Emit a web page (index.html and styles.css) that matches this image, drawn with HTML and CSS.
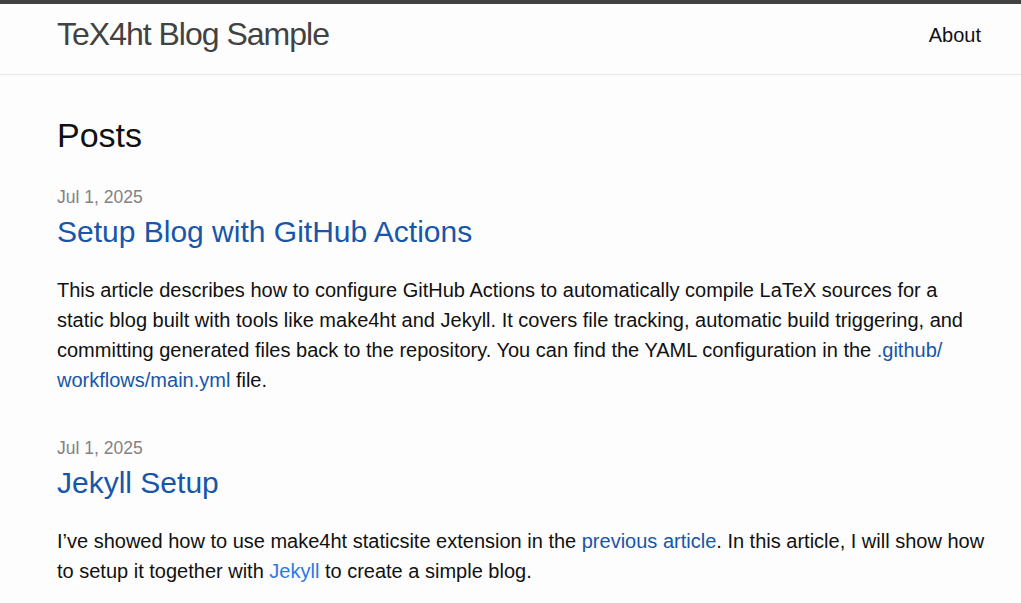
FILE: index.html
```html
<!DOCTYPE html>
<html lang="en">
<head>
<meta charset="utf-8">
<title>TeX4ht Blog Sample</title>
<link rel="stylesheet" href="styles.css">
</head>
<body>
<header class="site-header">
  <div class="wrapper header-row">
    <a class="site-title" href="#">TeX4ht Blog Sample</a>
    <nav class="site-nav"><a class="page-link" href="#">About</a></nav>
  </div>
</header>
<main class="page-content">
  <div class="wrapper content-wrapper">
    <h2 class="post-list-heading">Posts</h2>
    <ul class="post-list">
      <li class="post-item">
        <span class="post-meta">Jul 1, 2025</span>
        <h3 class="post-title"><a class="post-link visited" href="#">Setup Blog with GitHub Actions</a></h3>
        <p class="excerpt">This article describes how to configure GitHub Actions to automatically compile LaTeX sources for a static blog built with tools like make4ht and Jekyll. It covers file tracking, automatic build triggering, and committing generated files back to the repository. You can find the YAML configuration in the <a class="visited" href="#">.github/<wbr>workflows/main.yml</a> file.</p>
      </li>
      <li class="post-item">
        <span class="post-meta">Jul 1, 2025</span>
        <h3 class="post-title"><a class="post-link visited" href="#">Jekyll Setup</a></h3>
        <p class="excerpt">I’ve showed how to use make4ht staticsite extension in the <a class="visited" href="#">previous article</a>. In this article, I will show how to setup it together with <a class="fresh" href="#">Jekyll</a> to create a simple blog.</p>
      </li>
    </ul>
  </div>
</main>
</body>
</html>
```
FILE: styles.css
```css
html, body {
  margin: 0;
  padding: 0;
}
body {
  background: #fdfdfd;
  color: #111111;
  font-family: "Liberation Sans", Arial, Helvetica, sans-serif;
  font-size: 20px;
  line-height: 30px;
}
a {
  text-decoration: none;
}
.visited { color: #1756a9; }
.fresh { color: #2a7ae2; }

.wrapper {
  padding: 0 40px 0 57px;
}
.content-wrapper {
  padding-right: 34px;
}
.site-header {
  border-top: 4px solid #424242;
  border-bottom: 1px solid #e8e8e8;
}
.header-row {
  display: flex;
  justify-content: space-between;
  align-items: flex-start;
  height: 70px;
}
.site-title {
  font-size: 32px;
  letter-spacing: -1px;
  color: #424242;
  line-height: 60px;
}
.page-link {
  color: #111111;
  font-size: 20px;
  line-height: 63px;
}
.page-content {
  padding-top: 40px;
}
.post-list-heading {
  font-size: 34px;
  font-weight: 400;
  line-height: 40px;
  margin: 0 0 29px;
}
.post-list {
  list-style: none;
  margin: 0;
  padding: 0;
}
.post-item {
  margin-bottom: 40px;
}
.post-meta {
  display: block;
  color: #828282;
  font-size: 17.5px;
  line-height: 26px;
}
.post-title {
  margin: 2px 0 0;
  font-size: 30px;
  font-weight: 400;
  line-height: 40px;
}
.excerpt {
  margin: 23px 0 0;
}
```
